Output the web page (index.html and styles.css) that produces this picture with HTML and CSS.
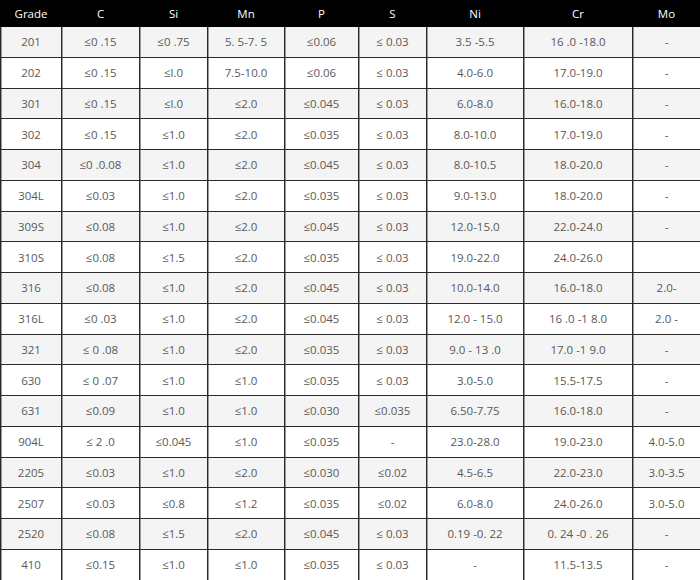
FILE: index.html
```html
<!DOCTYPE html>
<html>
<head>
<meta charset="utf-8">
<link rel="stylesheet" href="styles.css">
</head>
<body>
<table class="grid">
<colgroup>
<col class="c1"><col class="c2"><col class="c3"><col class="c4"><col class="c5"><col class="c6"><col class="c7"><col class="c8"><col class="c9">
</colgroup>
<thead>
<tr><th>Grade</th><th>C</th><th>Si</th><th>Mn</th><th>P</th><th>S</th><th>Ni</th><th>Cr</th><th>Mo</th></tr>
</thead>
<tbody>
<tr><td>201</td><td>≤0 .15</td><td>≤0 .75</td><td>5. 5-7. 5</td><td>≤0.06</td><td>≤ 0.03</td><td>3.5 -5.5</td><td>16 .0 -18.0</td><td>-</td></tr>
<tr><td>202</td><td>≤0 .15</td><td>≤l.0</td><td>7.5-10.0</td><td>≤0.06</td><td>≤ 0.03</td><td>4.0-6.0</td><td>17.0-19.0</td><td>-</td></tr>
<tr><td>301</td><td>≤0 .15</td><td>≤l.0</td><td>≤2.0</td><td>≤0.045</td><td>≤ 0.03</td><td>6.0-8.0</td><td>16.0-18.0</td><td>-</td></tr>
<tr><td>302</td><td>≤0 .15</td><td>≤1.0</td><td>≤2.0</td><td>≤0.035</td><td>≤ 0.03</td><td>8.0-10.0</td><td>17.0-19.0</td><td>-</td></tr>
<tr><td>304</td><td>≤0 .0.08</td><td>≤1.0</td><td>≤2.0</td><td>≤0.045</td><td>≤ 0.03</td><td>8.0-10.5</td><td>18.0-20.0</td><td>-</td></tr>
<tr><td>304L</td><td>≤0.03</td><td>≤1.0</td><td>≤2.0</td><td>≤0.035</td><td>≤ 0.03</td><td>9.0-13.0</td><td>18.0-20.0</td><td>-</td></tr>
<tr><td>309S</td><td>≤0.08</td><td>≤1.0</td><td>≤2.0</td><td>≤0.045</td><td>≤ 0.03</td><td>12.0-15.0</td><td>22.0-24.0</td><td>-</td></tr>
<tr><td>310S</td><td>≤0.08</td><td>≤1.5</td><td>≤2.0</td><td>≤0.035</td><td>≤ 0.03</td><td>19.0-22.0</td><td>24.0-26.0</td><td></td></tr>
<tr><td>316</td><td>≤0.08</td><td>≤1.0</td><td>≤2.0</td><td>≤0.045</td><td>≤ 0.03</td><td>10.0-14.0</td><td>16.0-18.0</td><td>2.0-</td></tr>
<tr><td>316L</td><td>≤0 .03</td><td>≤1.0</td><td>≤2.0</td><td>≤0.045</td><td>≤ 0.03</td><td>12.0 - 15.0</td><td>16 .0 -1 8.0</td><td>2.0 -</td></tr>
<tr><td>321</td><td>≤ 0 .08</td><td>≤1.0</td><td>≤2.0</td><td>≤0.035</td><td>≤ 0.03</td><td>9.0 - 13 .0</td><td>17.0 -1 9.0</td><td>-</td></tr>
<tr><td>630</td><td>≤ 0 .07</td><td>≤1.0</td><td>≤1.0</td><td>≤0.035</td><td>≤ 0.03</td><td>3.0-5.0</td><td>15.5-17.5</td><td>-</td></tr>
<tr><td>631</td><td>≤0.09</td><td>≤1.0</td><td>≤1.0</td><td>≤0.030</td><td>≤0.035</td><td>6.50-7.75</td><td>16.0-18.0</td><td>-</td></tr>
<tr><td>904L</td><td>≤ 2 .0</td><td>≤0.045</td><td>≤1.0</td><td>≤0.035</td><td>-</td><td>23.0-28.0</td><td>19.0-23.0</td><td>4.0-5.0</td></tr>
<tr><td>2205</td><td>≤0.03</td><td>≤1.0</td><td>≤2.0</td><td>≤0.030</td><td>≤0.02</td><td>4.5-6.5</td><td>22.0-23.0</td><td>3.0-3.5</td></tr>
<tr><td>2507</td><td>≤0.03</td><td>≤0.8</td><td>≤1.2</td><td>≤0.035</td><td>≤0.02</td><td>6.0-8.0</td><td>24.0-26.0</td><td>3.0-5.0</td></tr>
<tr><td>2520</td><td>≤0.08</td><td>≤1.5</td><td>≤2.0</td><td>≤0.045</td><td>≤ 0.03</td><td>0.19 -0. 22</td><td>0. 24 -0 . 26</td><td>-</td></tr>
<tr><td>410</td><td>≤0.15</td><td>≤1.0</td><td>≤1.0</td><td>≤0.035</td><td>≤ 0.03</td><td>-</td><td>11.5-13.5</td><td>-</td></tr>
</tbody>
</table>
</body>
</html>
```
FILE: styles.css
```css
html, body {
  margin: 0;
  padding: 0;
  background: #fff;
}
.grid {
  width: 700px;
  table-layout: fixed;
  border-collapse: collapse;
  font-family: "Open Sans", "Noto Sans", sans-serif;
  font-size: 11.5px;
}
.c1 { width: 61px; }
.c2 { width: 78px; }
.c3 { width: 68px; }
.c4 { width: 77px; }
.c5 { width: 74px; }
.c6 { width: 68px; }
.c7 { width: 97px; }
.c8 { width: 109px; }
.c9 { width: 68px; }
.grid thead tr {
  height: 26px;
}
.grid th {
  background: #000;
  color: #fff;
  font-weight: normal;
  padding: 0;
  text-align: center;
  border: 1px solid #000;
}
.grid tbody tr {
  height: 30.75px;
}
.grid td {
  padding: 0;
  text-align: center;
  color: #595959;
  border: 1px solid #2a2a2a;
  box-shadow: inset 1px 0 0 #9a9a9a;
}
.grid tbody tr:nth-child(odd) td {
  background: #f4f4f4;
}
.grid tbody tr:nth-child(even) td {
  background: #fff;
}
```
